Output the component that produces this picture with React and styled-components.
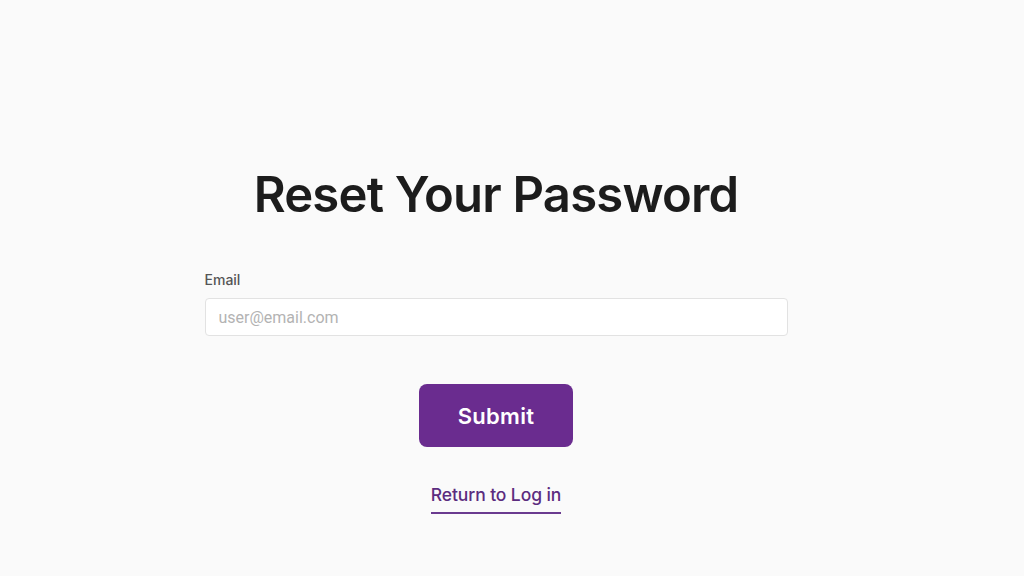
import React from "react";
import styled, { createGlobalStyle } from "styled-components";

const Global = createGlobalStyle`
  html, body { margin: 0; padding: 0; background: #fafafa; }
  body { font-family: "Inter", "Liberation Sans", sans-serif; }
  * { box-sizing: border-box; }
`;

const Page = styled.main`
  width: 1024px;
  height: 576px;
  background: #fafafa;
  display: flex;
  justify-content: center;
  padding-right: 32px;
  padding-top: 166px;
`;

const Column = styled.div`
  width: 583px;
  display: flex;
  flex-direction: column;
  align-items: center;
`;

const Title = styled.h1`
  margin: 0;
  font-family: "Inter", sans-serif;
  font-weight: 600;
  font-size: 49px;
  line-height: 58px;
  letter-spacing: -0.8px;
  color: #1c1c1c;
`;

const Field = styled.label`
  align-self: stretch;
  display: flex;
  flex-direction: column;
  gap: 9px;
  margin-top: 47px;
`;

const LabelText = styled.span`
  font-family: "Inter", sans-serif;
  font-size: 14px;
  line-height: 18px;
  font-weight: 500;
  color: #555555;
`;

const Input = styled.input`
  height: 38px;
  width: 100%;
  border: 1px solid #e2e2e2;
  border-radius: 4px;
  background: #ffffff;
  padding: 0 13px;
  font-family: "Roboto", sans-serif;
  font-size: 16px;
  color: #333;
  outline: none;
  &::placeholder { color: #b3b3b3; }
`;

const SubmitButton = styled.button`
  margin-top: 48px;
  width: 154px;
  height: 63px;
  border: none;
  border-radius: 8px;
  background: #6a2c8f;
  color: #ffffff;
  font-family: "Inter", sans-serif;
  font-weight: 600;
  font-size: 22px;
  letter-spacing: 0.3px;
  cursor: pointer;
`;

const ReturnLink = styled.a`
  margin-top: 37px;
  font-family: "Inter", sans-serif;
  font-weight: 500;
  font-size: 17.5px;
  letter-spacing: -0.1px;
  line-height: 22px;
  color: #5c2c7f;
  text-decoration: none;
  padding-bottom: 6px;
  border-bottom: 2px solid #6a3a8f;
  cursor: pointer;
`;

export default function App() {
  return (
    <>
      <Global />
      <Page>
        <Column>
          <Title>Reset Your Password</Title>
          <Field>
            <LabelText>Email</LabelText>
            <Input type="email" placeholder="user@email.com" />
          </Field>
          <SubmitButton type="button">Submit</SubmitButton>
          <ReturnLink href="#">Return to Log in</ReturnLink>
        </Column>
      </Page>
    </>
  );
}
